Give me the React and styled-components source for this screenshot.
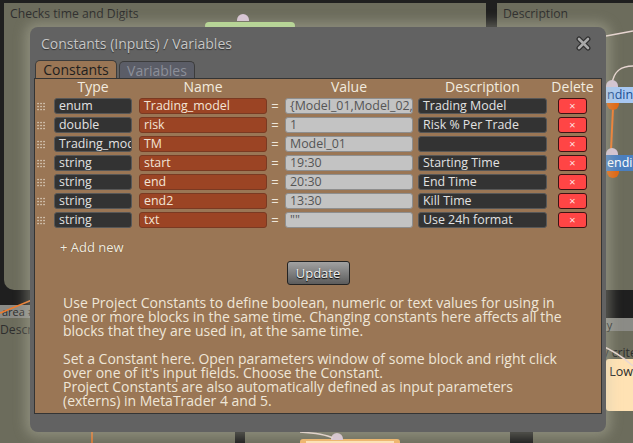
import React from "react";
import styled, { createGlobalStyle } from "styled-components";

const GlobalStyle = createGlobalStyle`
  html, body { margin: 0; padding: 0; background: #1e1e1e; }
  body { font-family: "Open Sans", "Noto Sans", sans-serif; }
`;

const Desk = styled.div`
  position: relative;
  width: 633px;
  height: 443px;
  overflow: hidden;
  background: #1f1f1f;
  font-family: "Open Sans", "Noto Sans", sans-serif;
`;

/* ---------- background diagram (free canvas) ---------- */

const Node = styled.div`
  position: absolute;
  left: ${p => p.$x}px;
  top: ${p => p.$y}px;
  width: ${p => p.$w}px;
  height: ${p => p.$h}px;
  background: #6c6c5c;
  border-radius: ${p => p.$round ? "0 0 10px 10px" : "0"};
  display: flex;
  flex-direction: column;
  overflow: hidden;
`;

const NodeStrip = styled.div`
  height: 13px;
  background: #8b8b86;
  color: #2b2b2b;
  font-size: 11px;
  line-height: 13px;
  padding-left: ${p => p.$pad || 4}px;
  white-space: nowrap;
`;

const NodeText = styled.div`
  color: #2e2e2e;
  font-size: 12.2px;
  line-height: 16px;
  padding: ${p => p.$pad || "3px 6px"};
  white-space: nowrap;
`;

const Block = styled.div`
  position: absolute;
  left: ${p => p.$x}px;
  top: ${p => p.$y}px;
  width: ${p => p.$w}px;
  height: ${p => p.$h}px;
  background: ${p => p.$bg};
  color: ${p => p.$fg};
  font-size: 12.5px;
  line-height: ${p => p.$h}px;
  border-radius: ${p => p.$r || 0}px;
  padding-left: ${p => p.$pad || 0}px;
  white-space: nowrap;
  overflow: hidden;
`;

const Pin = styled.div`
  position: absolute;
  left: ${p => p.$x}px;
  top: ${p => p.$y}px;
  width: 12px;
  height: ${p => p.$half ? 7 : 12}px;
  border-radius: ${p => p.$half === "top" ? "6px 6px 0 0" : p.$half === "bottom" ? "0 0 6px 6px" : "50%"};
  background: ${p => p.$c};
`;

const Wires = styled.svg`
  position: absolute;
  left: 0;
  top: 0;
`;

/* ---------- modal ---------- */

const Modal = styled.div`
  position: absolute;
  left: 30px;
  top: 27px;
  width: 576px;
  height: 405px;
  background: #626262;
  border-radius: 8px;
  box-shadow: 0 0 12px 5px rgba(200, 200, 180, 0.35);
  display: flex;
  flex-direction: column;
`;

const TitleBar = styled.div`
  height: 33px;
  display: flex;
  align-items: center;
  justify-content: space-between;
  padding: 0 15px 0 11px;
`;

const Title = styled.div`
  color: #c6c6c6;
  font-size: 14px;
  text-shadow: 0 1px 1px rgba(0, 0, 0, 0.5);
`;

const Tabs = styled.div`
  display: flex;
  align-items: flex-end;
  gap: 2px;
  margin-left: 5px;
  height: 18px;
  position: relative;
  z-index: 1;
`;

const Tab = styled.div`
  width: ${p => p.$w}px;
  height: ${p => p.$active ? 18 : 17}px;
  box-sizing: border-box;
  border: 1px solid #3c3c3c;
  border-bottom: none;
  border-radius: 5px 5px 0 0;
  background: ${p => p.$active ? "#9a7655" : "#5b5d67"};
  color: ${p => p.$active ? "#1e1e1e" : "#8c8f99"};
  font-size: 14px;
  line-height: 17px;
  text-align: center;
`;

const Panel = styled.div`
  margin-left: 4px;
  width: 568px;
  height: 336px;
  box-sizing: border-box;
  border: 1px solid #343434;
  background: #9a7655;
  display: flex;
  flex-direction: column;
`;

const Table = styled.div`
  display: flex;
  flex-direction: column;
  gap: 3px;
  margin-left: 2px;
`;

const Row = styled.div`
  display: grid;
  grid-template-columns: 17px 85px 128px 18px 133px 140px 29px;
  height: ${p => p.$head ? 15 : 16}px;
  align-items: center;
`;

const Head = styled.div`
  width: ${p => p.$w}px;
  display: flex;
  justify-content: center;
  white-space: nowrap;
  color: #f2ebdf;
  font-size: 14px;
  line-height: 15px;
`;

const Handle = styled.svg`
  display: block;
`;

const Field = styled.div`
  width: ${p => p.$w}px;
  height: 16px;
  box-sizing: border-box;
  border-radius: 3px;
  border: 1px solid ${p => p.$kind === "name" ? "#7a3a22" : p.$kind === "value" ? "#8e8e8e" : "#575757"};
  background: ${p => p.$kind === "name" ? "#9b4424" : p.$kind === "value" ? "#c3c3c3" : "#333333"};
  color: ${p => p.$kind === "value" ? "#555555" : p.$kind === "name" ? "#f3e4d6" : "#e2e2e2"};
  font-size: 12.4px;
  line-height: 14px;
  padding-left: 4px;
  white-space: nowrap;
  overflow: hidden;
`;

const Eq = styled.div`
  color: #eee6da;
  font-size: 13px;
  text-align: center;
  padding-right: 2px;
`;

const DeleteButton = styled.div`
  width: 29px;
  height: 16px;
  box-sizing: border-box;
  background: #ff4545;
  border: 1px solid #3d1414;
  border-radius: 3px;
  color: #ffe2e2;
  font-size: 11px;
  line-height: 13px;
  text-align: center;
`;

const AddNew = styled.div`
  margin: 11px 0 0 25px;
  color: #f4ecdf;
  font-size: 13px;
  line-height: 18px;
  text-shadow: 0 0 1px rgba(0, 0, 0, 0.4);
`;

const UpdateButton = styled.div`
  align-self: center;
  margin-top: 5px;
  width: 63px;
  height: 24px;
  box-sizing: border-box;
  border: 1px solid #232323;
  border-radius: 3px;
  background: linear-gradient(#a2a2a2, #5c5c5c);
  color: #f0f0f0;
  font-size: 13px;
  line-height: 22px;
  text-align: center;
  text-shadow: 0 1px 1px #000;
`;

const Note = styled.div`
  margin: 11px 0 0 28px;
  color: #efe6d8;
  font-size: 14px;
  line-height: 14px;
`;

const NoteLine = styled.div`
  white-space: nowrap;
  height: 14px;
`;

const rows = [
  ["enum", "Trading_model", "{Model_01,Model_02,Model_03}", "Trading Model"],
  ["double", "risk", "1", "Risk % Per Trade"],
  ["Trading_model", "TM", "Model_01", ""],
  ["string", "start", "19:30", "Starting Time"],
  ["string", "end", "20:30", "End Time"],
  ["string", "end2", "13:30", "Kill Time"],
  ["string", "txt", "\"\"", "Use 24h format"],
];

const noteLines = [
  "Use Project Constants to define boolean, numeric or text values for using in",
  "one or more blocks in the same time. Changing constants here affects all the",
  "blocks that they are used in, at the same time.",
  "",
  "Set a Constant here. Open parameters window of some block and right click",
  "over one of it's input fields. Choose the Constant.",
  "Project Constants are also automatically defined as input parameters",
  "(externs) in MetaTrader 4 and 5.",
];

function CloseIcon() {
  return (
    <svg width="15" height="15" viewBox="0 0 15 15">
      <path d="M3 3 L12 12 M12 3 L3 12" stroke="#2e2e2e" strokeWidth="5" strokeLinecap="round" />
      <path d="M3 3 L12 12 M12 3 L3 12" stroke="#a9a9a9" strokeWidth="2.6" strokeLinecap="round" />
    </svg>
  );
}

function Dots() {
  return (
    <Handle width="9" height="9" viewBox="0 0 9 9">
      {[1, 4, 7].map(x => [1.5, 4.5, 7.5].map(y => (
        <rect key={x + "-" + y} x={x - 0.6} y={y - 0.6} width="1.3" height="1.3" fill="#e6dccd" />
      )))}
    </Handle>
  );
}

function Background() {
  return (
    <>
      <Node $x={4} $y={3} $w={482} $h={287} $round>
        <NodeText>Checks time and Digits</NodeText>
      </Node>
      <Node $x={497} $y={3} $w={150} $h={287} $round>
        <NodeText>Description</NodeText>
      </Node>
      <Node $x={-10} $y={305} $w={245} $h={160}>
        <NodeStrip $pad={12}>area #1</NodeStrip>
        <NodeText $pad="4px 6px 0 10px">Description</NodeText>
      </Node>
      <Node $x={245} $y={305} $w={265} $h={160} />
      <Node $x={533} $y={318} $w={110} $h={150}>
        <NodeStrip $pad={60}>Buy</NodeStrip>
        <NodeText $pad="14px 6px 0 62px">by criteria</NodeText>
      </Node>
      <Block $x={205} $y={22} $w={90} $h={8} $bg="#b3d98f" $r={4} />
      <Pin $x={237} $y={14} $c="#d9c6d6" $half="top" />
      <Block $x={300} $y={439} $w={100} $h={10} $bg="#f2b66a" $r={3} />
      <Block $x={306} $y={441} $w={88} $h={10} $bg="#ffe4b8" />
      <Pin $x={331} $y={433} $c="#d9c6d6" $half="top" />
      <Block $x={606} $y={359} $w={40} $h={52} $bg="#ffe2b4" $fg="#2a2a2a" $r={3}>
        <span style={{ position: "relative", top: "-13px" }}>&nbsp;Low (</span>
      </Block>
      <Wires width="633" height="443" viewBox="0 0 633 443">
        <path d="M606 36 L633 31" stroke="#e8d6d2" strokeWidth="1.5" fill="none" />
        <path d="M612 84 C614 70 622 66 633 66" stroke="#e8d6d2" strokeWidth="1.5" fill="none" />
        <path d="M613 108 L611 150" stroke="#f07a2a" strokeWidth="2" fill="none" />
        <path d="M0 313 L32 300" stroke="#f07a2a" strokeWidth="1.5" fill="none" />
        <path d="M92 432 L92 443" stroke="#f07a2a" strokeWidth="1.5" fill="none" />
        <path d="M600 345 C612 350 624 358 633 366" stroke="#e8d6d2" strokeWidth="1.5" fill="none" />
        <path d="M300 432 C315 433 325 434 333 438" stroke="#e8d6d2" strokeWidth="1.5" fill="none" />
      </Wires>
      <Pin $x={606} $y={80} $c="#d4c4d4" $half="top" />
      <Block $x={606} $y={87} $w={30} $h={16} $bg="#a8c8f2" $fg="#1d4f92" $pad={1}>nding</Block>
      <Pin $x={607} $y={103} $c="#e0650f" $half="bottom" />
      <Pin $x={606} $y={148} $c="#d4c4d4" $half="top" />
      <Block $x={606} $y={155} $w={30} $h={16} $bg="#4b7fbf" $fg="#ffffff" $pad={1}>endin</Block>
      <Pin $x={607} $y={171} $c="#e0650f" $half="bottom" />
    </>
  );
}

export default function App() {
  return (
    <Desk>
      <GlobalStyle />
      <Background />
      <Modal>
        <TitleBar>
          <Title>Constants (Inputs) / Variables</Title>
          <CloseIcon />
        </TitleBar>
        <Tabs>
          <Tab $active $w={82}>Constants</Tab>
          <Tab $w={76}>Variables</Tab>
        </Tabs>
        <Panel>
          <Table>
            <Row $head>
              <span />
              <Head $w={78}>Type</Head>
              <Head $w={128}>Name</Head>
              <span />
              <Head $w={128}>Value</Head>
              <Head $w={129}>Description</Head>
              <Head $w={29}>Delete</Head>
            </Row>
            {rows.map(([type, name, value, desc]) => (
              <Row key={name}>
                <Dots />
                <Field $w={78}>{type}</Field>
                <Field $w={128} $kind="name">{name}</Field>
                <Eq>=</Eq>
                <Field $w={128} $kind="value">{value}</Field>
                <Field $w={129}>{desc}</Field>
                <DeleteButton>×</DeleteButton>
              </Row>
            ))}
          </Table>
          <AddNew>+ Add new</AddNew>
          <UpdateButton>Update</UpdateButton>
          <Note>
            {noteLines.map((l, i) => <NoteLine key={i}>{l}</NoteLine>)}
          </Note>
        </Panel>
      </Modal>
    </Desk>
  );
}
